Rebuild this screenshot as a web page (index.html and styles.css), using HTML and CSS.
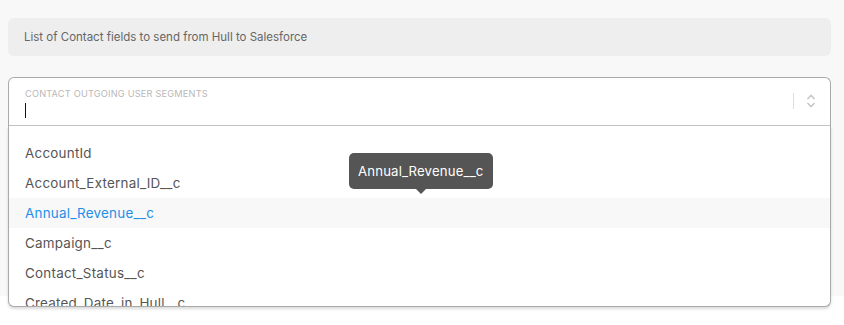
FILE: index.html
```html
<!DOCTYPE html>
<html lang="en">
  <head>
    <meta charset="UTF-8" />
    <title>Contact outgoing fields</title>
    <link rel="stylesheet" href="styles.css">
  </head>
  <body>
    <div class="panel">
      <div class="hint">List of Contact fields to send from Hull to Salesforce</div>

      <div class="select">
        <div class="control">
          <div class="value">
            <div class="label">Contact outgoing user segments</div>
            <div class="caret"></div>
          </div>
          <div class="indicators">
            <span class="sep"></span>
            <svg class="chevrons" width="10" height="14" viewBox="0 0 10 14">
              <path d="M1.5 5 L5 1.5 L8.5 5" fill="none" stroke="#c8c8c8" stroke-width="1.6"/>
              <path d="M1.5 9 L5 12.5 L8.5 9" fill="none" stroke="#c8c8c8" stroke-width="1.6"/>
            </svg>
          </div>
        </div>

        <div class="menu">
          <div class="option">AccountId</div>
          <div class="option">Account_External_ID__c</div>
          <div class="option active">Annual_Revenue__c</div>
          <div class="option">Campaign__c</div>
          <div class="option">Contact_Status__c</div>
          <div class="option">Created_Date_in_Hull__c</div>
        </div>

        <div class="tooltip">Annual_Revenue__c</div>
      </div>
    </div>
  </body>
</html>
```
FILE: styles.css
```css
html, body {
  margin: 0;
  background: #fff;
}

body {
  min-height: 100vh;
  font-family: Inter, "Noto Sans", sans-serif;
  color: #555;
}

.panel {
  background: #f8f8f8;
  padding: 18px 13px 170px 8px;
}

.hint {
  background: #eee;
  border-radius: 6px;
  height: 38px;
  padding: 0 16px;
  display: flex;
  align-items: center;
  font-size: 11.5px;
  color: #666;
}

.select {
  position: relative;
  z-index: 1;
  margin-top: 21px;
  background: #fff;
  border: 1px solid #aaa;
  border-bottom: 0;
  border-radius: 6px 6px 0 0;
}

.control {
  height: 47px;
  border-bottom: 1px solid #c4c4c4;
  display: flex;
  align-items: center;
  justify-content: space-between;
  padding: 0 16px;
}

.value {
  display: flex;
  flex-direction: column;
  gap: 4px;
  margin-top: 2px;
}

.label {
  font-size: 9.2px;
  text-transform: uppercase;
  color: #b8b8b8;
  letter-spacing: 0.2px;
}

.caret {
  width: 1px;
  height: 15px;
  background: #111;
}

.indicators {
  display: flex;
  align-items: center;
  gap: 12px;
  margin-right: -2px;
  margin-top: -2px;
}

.sep {
  width: 1px;
  height: 16px;
  background: #ddd;
}

.menu {
  position: absolute;
  left: -1px;
  right: -1px;
  top: 48px;
  height: 181px;
  overflow: hidden;
  padding-top: 12px;
  box-sizing: border-box;
  background: #fff;
  border: 1px solid #aaa;
  border-top: 0;
  border-radius: 0 0 6px 6px;
  box-shadow: 0 2px 3px rgba(0, 0, 0, 0.15);
}

.option {
  height: 30px;
  line-height: 30px;
  padding: 0 16px;
  font-size: 13.4px;
  letter-spacing: 0.25px;
  color: #555;
}

.option.active {
  background: #f8f8f8;
  color: #1e8ee8;
}

.tooltip {
  position: absolute;
  left: 340px;
  top: 75px;
  height: 36px;
  padding: 0 9px;
  background: #555;
  color: #fff;
  font-size: 13.2px;
  letter-spacing: 0.15px;
  line-height: 36px;
  border-radius: 5px;
}

.tooltip::after {
  content: "";
  position: absolute;
  left: 50%;
  bottom: -5px;
  margin-left: -5px;
  border-left: 5px solid transparent;
  border-right: 5px solid transparent;
  border-top: 5px solid #555;
}
```
